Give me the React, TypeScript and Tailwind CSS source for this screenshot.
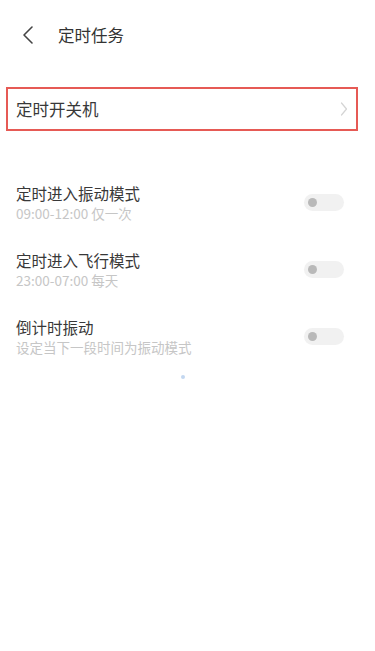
import React from "react";

const font = { fontFamily: '"Noto Sans CJK SC", "Noto Sans", sans-serif' };

function Toggle() {
  return (
    <div className="w-[40px] h-[17px] rounded-full bg-[#f1f1f1] flex items-center pl-[4px]">
      <div className="w-[9px] h-[9px] rounded-full bg-[#b9b9b9]" />
    </div>
  );
}

function Row({ title, sub }: { title: string; sub: string }) {
  return (
    <div className="h-[67px] flex items-center justify-between pl-[16px] pr-[31px]">
      <div className="flex flex-col">
        <div className="text-[15.5px] leading-[22px] text-[#383838]">{title}</div>
        <div className="text-[13.5px] leading-[19px] text-[#c6c6c6]">{sub}</div>
      </div>
      <Toggle />
    </div>
  );
}

export default function App() {
  return (
    <div className="w-[375px] h-[651px] bg-white overflow-hidden" style={font}>
      <div className="h-[70px] flex items-center pl-[21px]">
        <svg width="14" height="20" viewBox="0 0 14 20" className="text-[#444]">
          <path d="M11 2 L3 10 L11 18" fill="none" stroke="currentColor" strokeWidth="1.6" strokeLinecap="round" strokeLinejoin="round" />
        </svg>
        <div className="ml-[23px] text-[16.5px] text-[#333]">定时任务</div>
      </div>
      <div className="mt-[17px] ml-[6px] w-[352px] h-[44px] border-2 border-[#e65a55] flex items-center justify-between pl-[8px] pr-[8px]">
        <div className="text-[16.5px] text-[#383838]">定时开关机</div>
        <svg width="8" height="16" viewBox="0 0 8 16">
          <path d="M1.5 2 L6.5 8 L1.5 14" fill="none" stroke="#d4d4d4" strokeWidth="1.2" strokeLinecap="round" strokeLinejoin="round" />
        </svg>
      </div>
      <div className="mt-[38px]">
        <Row title="定时进入振动模式" sub="09:00-12:00 仅一次" />
        <Row title="定时进入飞行模式" sub="23:00-07:00 每天" />
        <Row title="倒计时振动" sub="设定当下一段时间为振动模式" />
      </div>
      <div className="mt-[5px] ml-[181px] w-[4px] h-[4px] rounded-full bg-[#c3d7f0]" />
    </div>
  );
}
